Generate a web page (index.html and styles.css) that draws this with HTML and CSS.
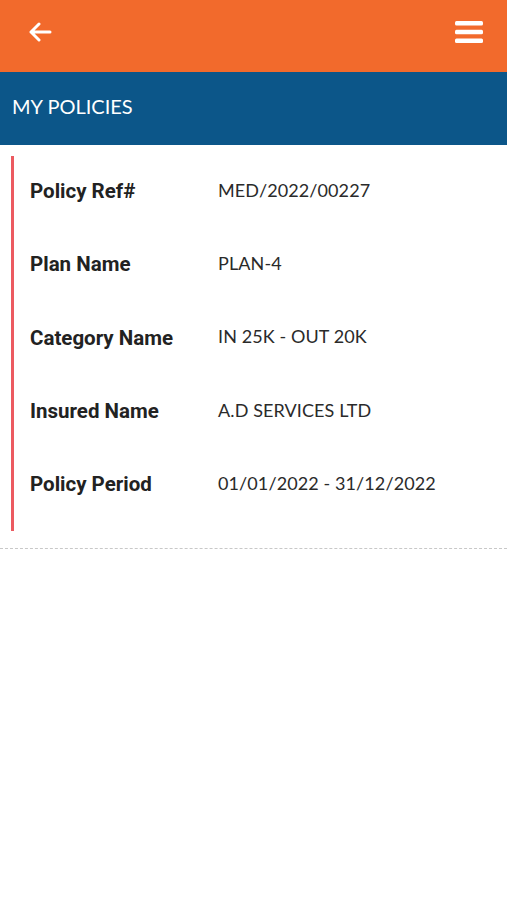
FILE: index.html
```html
<!DOCTYPE html>
<html lang="en">
<head>
    <meta charset="UTF-8">
    <meta name="viewport" content="width=device-width, initial-scale=1.0">
    <title>My Policies</title>
    <link rel="stylesheet" href="styles.css">
</head>
<body>
    <!-- Top bar -->
    <div class="topbar">
        <button class="icon-btn" aria-label="Back">
            <svg width="24" height="20" viewBox="0 0 24 20">
                <path d="M22 10H3M11 2L3 10l8 8" fill="none" stroke="#fff" stroke-width="3" stroke-linecap="round" stroke-linejoin="round"/>
            </svg>
        </button>
        <button class="icon-btn" aria-label="Menu">
            <svg width="28" height="24" viewBox="0 0 28 24">
                <rect x="0" y="1" width="28" height="4.5" rx="1.5" fill="#fff"/>
                <rect x="0" y="9.8" width="28" height="4.5" rx="1.5" fill="#fff"/>
                <rect x="0" y="18.5" width="28" height="4.5" rx="1.5" fill="#fff"/>
            </svg>
        </button>
    </div>

    <div class="title-bar">MY POLICIES</div>

    <!-- Policy card -->
    <div class="policy-list">
        <div class="policy">
            <div class="row"><span class="label">Policy Ref#</span><span class="value">MED/2022/00227</span></div>
            <div class="row"><span class="label">Plan Name</span><span class="value">PLAN-4</span></div>
            <div class="row"><span class="label">Category Name</span><span class="value">IN 25K - OUT 20K</span></div>
            <div class="row"><span class="label">Insured Name</span><span class="value">A.D SERVICES LTD</span></div>
            <div class="row"><span class="label">Policy Period</span><span class="value">01/01/2022 - 31/12/2022</span></div>
        </div>
    </div>
</body>
</html>
```

FILE: styles.css
```css
body {
    margin: 0;
    background: #fff;
    font-family: Roboto, "Liberation Sans", sans-serif;
}

.topbar {
    height: 72px;
    background-color: #f26a2c;
    display: flex;
    justify-content: space-between;
    align-items: center;
    padding: 0 24px 8px 28px;
    box-sizing: border-box;
}

.icon-btn {
    background: none;
    border: none;
    padding: 0;
    display: flex;
    cursor: pointer;
}

.title-bar {
    height: 73px;
    background-color: #0c5689;
    color: #fff;
    font-family: Lato, "Open Sans", sans-serif;
    font-size: 20px;
    display: flex;
    align-items: center;
    padding-left: 12px;
    padding-bottom: 6px;
    box-sizing: border-box;
}

.policy-list {
    padding-top: 11px;
    padding-bottom: 17px;
    border-bottom: 1px dashed #c8c8c8;
}

.policy {
    margin-left: 11px;
    border-left: 3px solid #ec5a60;
    padding-bottom: 9px;
}

.row {
    height: 73.3px;
    display: flex;
    align-items: center;
    padding-left: 16px;
    padding-bottom: 4px;
    box-sizing: border-box;
}

.label {
    width: 188px;
    flex-shrink: 0;
    font-weight: bold;
    font-size: 20.5px;
    color: #222;
    padding-top: 1px;
}

.value {
    font-family: Lato, "Open Sans", sans-serif;
    font-size: 18px;
    color: #2a2a2a;
    letter-spacing: 0.1px;
    padding-bottom: 2px;
}
```
